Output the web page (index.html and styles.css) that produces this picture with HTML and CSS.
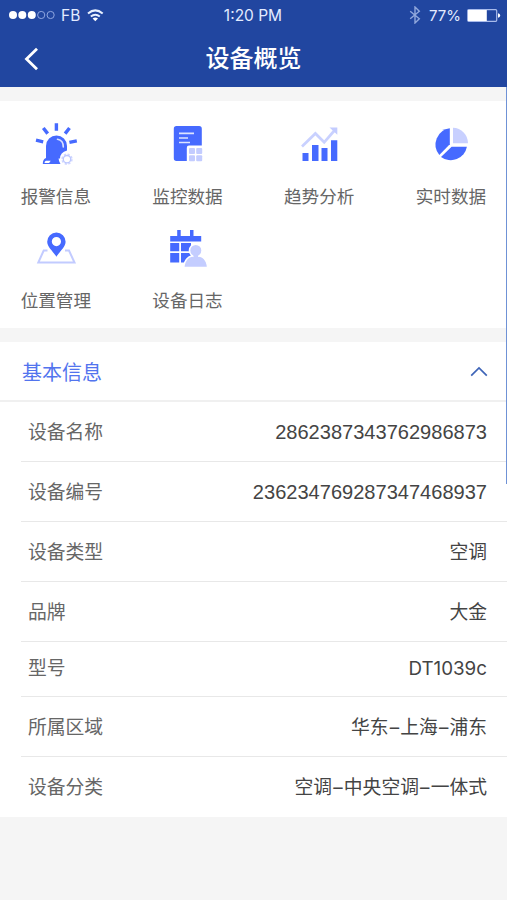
FILE: index.html
```html
<!DOCTYPE html>
<html lang="zh-CN">
<head>
<meta charset="utf-8">
<title>设备概览</title>
<link rel="stylesheet" href="styles.css">
</head>
<body>
<div class="app">
  <header class="header">
    <div class="status">
      <div class="carrier">
        <svg width="46" height="10" viewBox="0 0 46 10"><g fill="#fff"><circle cx="4" cy="5" r="4"/><circle cx="13.3" cy="5" r="4"/><circle cx="22.8" cy="5" r="4"/></g><g fill="none" stroke="#8fa6e0"><circle cx="32.2" cy="5" r="3.6"/><circle cx="41.6" cy="5" r="3.6"/></g></svg>
        <span class="operator">FB</span>
        <svg class="wifi" width="17" height="13" viewBox="0 0 17 13" fill="none" stroke="#e9f1ff" stroke-width="2"><path d="M1 4.500Q8.300-1.800 15.700 4.500M3.800 7.500q4.500-3.600 9 0"/><path d="M5.600 9.600q2.700-2 5.400 0L8.300 12.300z" fill="#fff" stroke="none"/></svg>
      </div>
      <span class="clock">1:20 PM</span>
      <div class="power">
        <svg width="12" height="18" viewBox="0 0 12 18" fill="none" stroke="#91a8dc" stroke-width="1.4"><path d="M1.200 5.200 10.300 12.800 6 17V1l4.300 4.200L1.200 12.800"/></svg>
        <span class="percent">77%</span>
        <svg class="battery" width="34" height="13" viewBox="0 0 34 13"><rect x=".7" y=".7" width="29" height="11.600" rx="1" fill="none" stroke="#a9bbeb" stroke-width="1.200"/><path d="M1 1h18.800v11H1z" fill="#fff"/><path d="M31 4.300q2.200.4 2.200 2.200T31 8.700z" fill="#fff"/></svg>
      </div>
    </div>
    <div class="navbar">
      <svg class="back" width="16" height="24" viewBox="0 0 16 24" fill="none" stroke="#fff" stroke-width="2.800"><path d="M14 1.700 3.500 12 14 22.300"/></svg>
      <h1 class="title">设备概览</h1>
    </div>
  </header>

  <main class="content">
    <nav class="menu">
      <a class="tile">
        <svg width="44" height="44" viewBox="0 0 44 44">
          <path d="M12 36.500V24a10.500 10.500 0 0 1 21 0v4.500q-7 2-7 8z" fill="#466aff"/>
          <path d="M23.500 17.200q6 1.300 5.800 7.800" fill="none" stroke="#d9e1ff" stroke-width="1.600" stroke-linecap="round"/>
          <path d="M12 36h12.500q.2 3.500 2 6H8.800q0-5 3.200-6z" fill="#466aff"/>
          <path d="M12 38.800h4.700l-1.600 2.200h-4.600q.1-1.700 1.500-2.200z" fill="#fff"/>
          <g stroke="#466aff" stroke-width="3.400"><path d="M22.400 1.200v7.600M9.300 6l4.400 5.600M35.500 6l-4.400 5.600M2 18.200l7.200 1.600M42.800 18.900l-7.400 1.500"/></g>
          <circle cx="33" cy="37.200" r="4.900" fill="none" stroke="#d0d7ff" stroke-width="1.600" stroke-dasharray="2.200 1.650"/>
          <circle cx="33" cy="37.200" r="3.700" fill="none" stroke="#bcc7ff" stroke-width="1.300"/>
        </svg>
        <span>报警信息</span>
      </a>
      <a class="tile">
        <svg width="44" height="44" viewBox="0 0 44 44">
          <path d="M10.500 4h22.600a2.700 2.700 0 0 1 2.700 2.700V23.500H23q-2.200 0-2.200 2.200V39H10.500a2.700 2.700 0 0 1-2.700-2.700V6.700A2.700 2.700 0 0 1 10.500 4z" fill="#466aff"/>
          <path d="M13 11.300h15M13 16h9M13 20.500h11" stroke="#dce4ff" stroke-width="1.700"/>
          <g fill="#c3ccff"><rect x="23" y="26" width="6" height="6" rx="1"/><rect x="30.200" y="26" width="6" height="6" rx="1"/><rect x="23" y="33.300" width="6" height="6" rx="1"/><rect x="30.200" y="33.300" width="6" height="6" rx="1"/></g>
        </svg>
        <span>监控数据</span>
      </a>
      <a class="tile">
        <svg width="44" height="44" viewBox="0 0 44 44">
          <path d="M5.500 31h6v8h-6zM15 23h6.500v16H15zM24.500 26h6v13h-6zM34 18.300h6.300V39H34z" fill="#466aff"/>
          <path d="M5 24.500 18.400 11.500 27.200 20.300 37 9" fill="none" stroke="#c9d1ff" stroke-width="2.700"/>
          <path d="M32.500 5.500h7.800v7.300z" fill="#c3ccff"/>
        </svg>
        <span>趋势分析</span>
      </a>
      <a class="tile">
        <svg width="44" height="44" viewBox="0 0 44 44">
          <path d="M20.800 6.300v16L10.300 33A16.400 16.400 0 0 1 20.800 6.300z" fill="#466aff"/>
          <path d="M22.600 24.800h15.300A16.300 16.300 0 0 1 12 34.900z" fill="#466aff"/>
          <path d="M24 5.700A15.500 15.500 0 0 1 39 21.200H24z" fill="#c8d0ff"/>
        </svg>
        <span>实时数据</span>
      </a>
      <a class="tile">
        <svg width="44" height="44" viewBox="0 0 44 44">
          <path d="M13.500 24.500H9.700L4.300 36.600h36.200L35 24.500h-4" fill="none" stroke="#c2cbff" stroke-width="2"/>
          <path fill="#466aff" fill-rule="evenodd" d="M22.400 6.500a9.200 9.200 0 0 0-9.200 9.200c0 5 5.500 9.200 9.200 15.100 3.700-5.900 9.200-10.100 9.200-15.100a9.200 9.200 0 0 0-9.200-9.200zm0 4.500a4.600 4.600 0 1 1 0 9.200 4.600 4.600 0 0 1 0-9.200z"/>
        </svg>
        <span>位置管理</span>
      </a>
      <a class="tile">
        <svg width="44" height="44" viewBox="0 0 44 44">
          <path d="M4.200 10h7V4h3.500v6H24V4h3.500v6h7.700v5.500h-31zM4.200 17h9v8.300h-9zM15 17h10v8.300H15zM4.200 27h9v9.500h-9zM15 27h10v9.500H15z" fill="#466aff"/>
          <g fill="#c4cdff" stroke="#fff" stroke-width="1.600"><path d="M17.700 41.500c.8-8.200 5.300-12 12-12s11.300 3.800 12 12z"/><circle cx="29.800" cy="24.500" r="6.300"/></g><path d="M27.500 28h4.600v4h-4.600z" fill="#c4cdff"/>
        </svg>
        <span>设备日志</span>
      </a>
    </nav>

    <section class="panel">
      <div class="panel-head">
        <h2 class="panel-title">基本信息</h2>
        <svg class="chevron" width="18" height="12" viewBox="0 0 18 12" fill="none" stroke="#3f65b8" stroke-width="1.700"><path d="M1.200 9.700 9 2l7.800 7.700"/></svg>
      </div>
      <dl class="rows">
        <div class="row"><dt>设备名称</dt><dd class="number">2862387343762986873</dd></div>
        <div class="row"><dt>设备编号</dt><dd class="number">236234769287347468937</dd></div>
        <div class="row"><dt>设备类型</dt><dd>空调</dd></div>
        <div class="row"><dt>品牌</dt><dd>大金</dd></div>
        <div class="row row-short"><dt>型号</dt><dd>DT1039c</dd></div>
        <div class="row"><dt>所属区域</dt><dd>华东<span class="dash">–</span>上海<span class="dash">–</span>浦东</dd></div>
        <div class="row"><dt>设备分类</dt><dd>空调<span class="dash">–</span>中央空调<span class="dash">–</span>一体式</dd></div>
      </dl>
    </section>
    <div class="edge"></div>
  </main>
</div>
</body>
</html>
```
FILE: styles.css
```css
* { box-sizing: border-box; }
body {
  margin: 0;
  background: #f5f5f5;
  font-family: Inter, "Noto Sans CJK SC", sans-serif;
}
h1, h2, dl, dd { margin: 0; font-weight: 400; }
svg { display: block; flex: none; }
.app { min-height: 900px; overflow-x: hidden; }

.header { height: 87px; background: #2146a0; color: #fff; }
.status {
  display: grid;
  grid-template-columns: 1fr auto 1fr;
  align-items: center;
  height: 30px;
  padding: 0 7px 0 9px;
  font-size: 15.5px;
  color: #e3ebff;
}
.carrier, .power { display: flex; align-items: center; }
.power { justify-content: flex-end; }
.operator { margin-left: 6px; }
.wifi { margin-left: 7px; }
.clock { margin-left: -3px; }
.percent { margin: 0 6px 0 8px; font-size: 15px; }
.battery { margin-right: -1px; }
.navbar {
  display: grid;
  grid-template-columns: 24px 1fr 24px;
  align-items: center;
  height: 57px;
  padding: 1px 23px 0;
}
.title { font-size: 24px; font-weight: 500; line-height: 36px; text-align: center; }

.content { position: relative; padding-top: 14px; }
.menu {
  display: grid;
  grid-template-columns: repeat(4, 131.700px);
  grid-auto-rows: 104px;
  height: 227px;
  margin-left: -10px;
  padding-top: 21px;
  background: #fff;
}
.tile {
  display: flex;
  flex-direction: column;
  align-items: center;
  gap: 16.500px;
  font-size: 17.600px;
  line-height: 28px;
  color: #666;
}

.panel { margin-top: 14px; background: #fff; }
.panel-head {
  display: flex;
  align-items: center;
  justify-content: space-between;
  height: 60px;
  padding: 3px 19px 0 22px;
  border-bottom: 2px solid #f0f0f0;
}
.panel-title { font-size: 20px; line-height: 30px; color: #5274ee; }
.chevron { margin-top: -1px; }
.rows { padding-left: 21px; }
.row {
  display: flex;
  align-items: center;
  justify-content: space-between;
  height: 60px;
  padding: 2px 20px 0 7px;
  border-bottom: 1px solid #e8e8e8;
  font-size: 18.800px;
  line-height: 28px;
}
.row:last-child { border-bottom: 0; }
.row-short { height: 55px; padding-bottom: 2px; }
.row dt { color: #666; }
.row dd { color: #444; }
.row .number {
  padding-bottom: 1px;
  font-family: "Liberation Sans", sans-serif;
  font-size: 20.060px;
}
.dash { display: inline-block; width: 11.700px; text-align: center; }

.edge {
  position: absolute;
  top: 0;
  right: 0;
  width: 1px;
  height: 397px;
  background: #6f92d6;
}
```
